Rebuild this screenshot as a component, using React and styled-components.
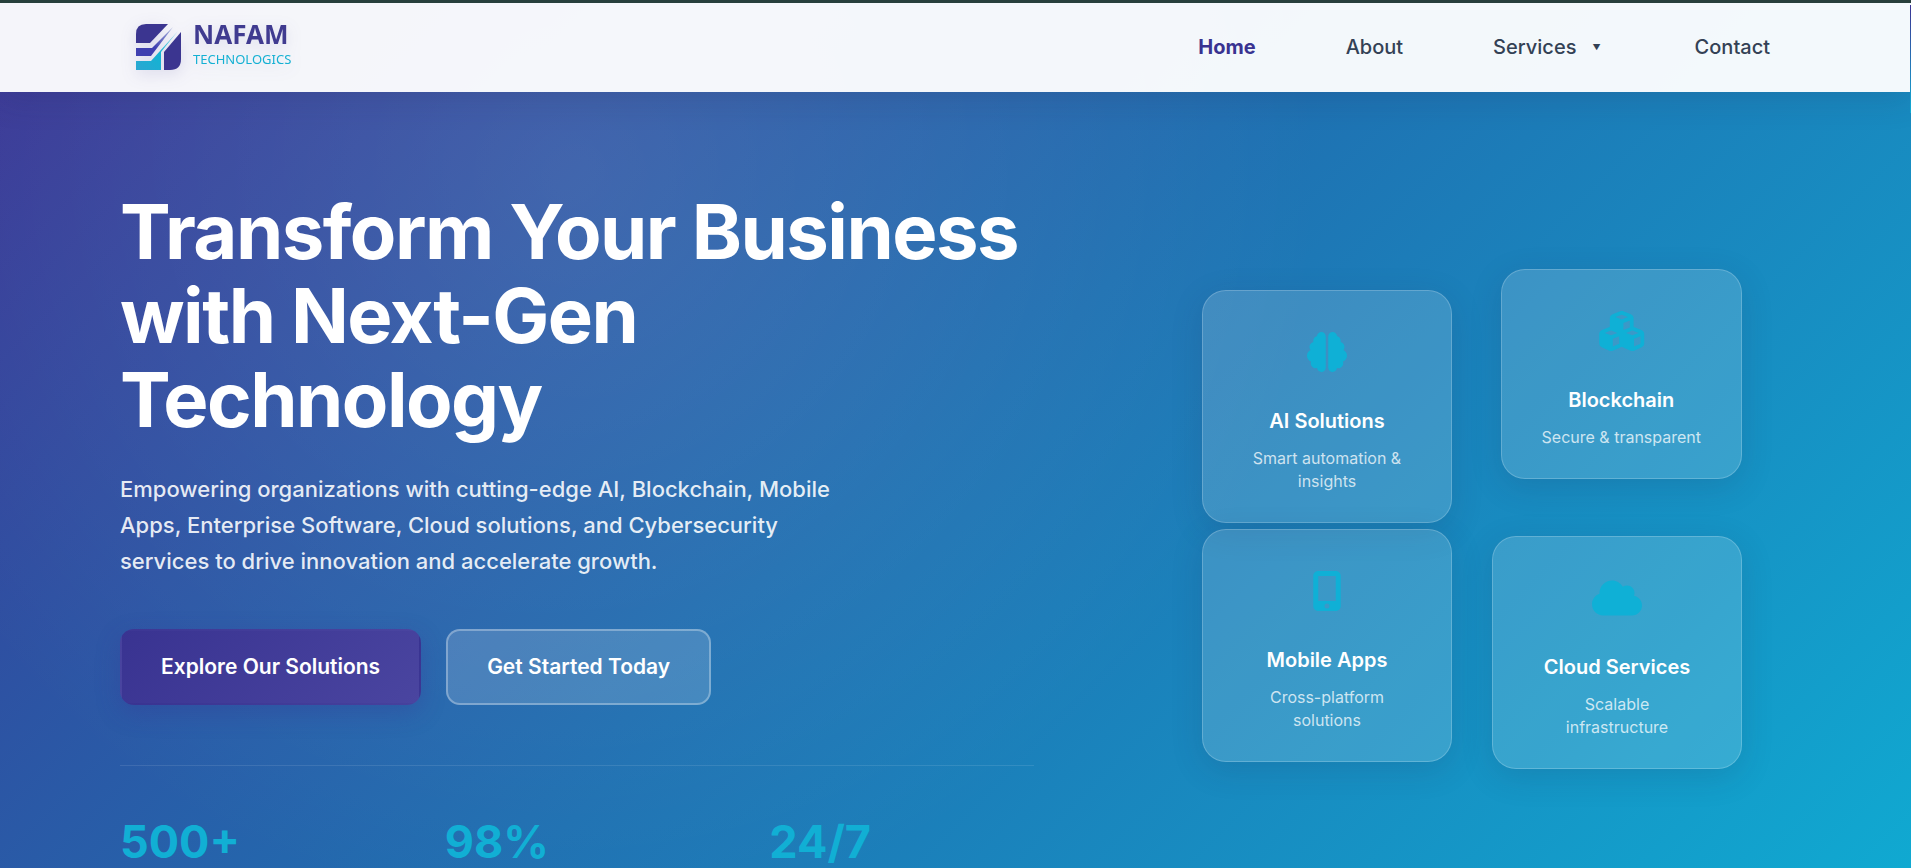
import React from "react";
import styled, { createGlobalStyle } from "styled-components";
import {
  FaBrain,
  FaCubes,
  FaCloud,
  FaMobileScreenButton,
} from "react-icons/fa6";

const NAV_LINKS = [
  { name: "Home", active: true },
  { name: "About" },
  { name: "Services", menu: true },
  { name: "Contact" },
];

const STATS = ["500+", "98%", "24/7"];

const CARDS_LEFT = [
  { icon: FaBrain, title: "AI Solutions", desc: "Smart automation & insights" },
  {
    icon: FaMobileScreenButton,
    title: "Mobile Apps",
    desc: "Cross-platform solutions",
  },
];

const CARDS_RIGHT = [
  { icon: FaCubes, title: "Blockchain", desc: "Secure & transparent" },
  { icon: FaCloud, title: "Cloud Services", desc: "Scalable infrastructure" },
];

const LogoMark = () => (
  <svg width="46" height="46" viewBox="0 0 46 46" aria-hidden="true">
    <defs>
      <linearGradient id="ray" x1="0" y1="1" x2="1" y2="0">
        <stop offset="0.4" stopColor="#3f3fb0" />
        <stop offset="1" stopColor="#a9b4dd" />
      </linearGradient>
      <linearGradient id="beam" x1="0" y1="1" x2="1" y2="0">
        <stop offset="0" stopColor="#2ba6d2" />
        <stop offset="0.5" stopColor="#12b4d3" />
        <stop offset="1" stopColor="#8fdcea" />
      </linearGradient>
    </defs>
    <path d="M0 19V10Q0 0 10 0H32L14 19Z" fill="#3b3590" />
    <path d="M0 24H16L37 3L15 32H0Z" fill="url(#ray)" />
    <path d="M0 37H15L42 7L25 28V46H0Z" fill="url(#beam)" />
    <path d="M45 8V35Q45 46 34 46H28V28Z" fill="#3b3590" />
  </svg>
);

const FeatureCard = ({ icon: Icon, title, desc }) => (
  <Card>
    <CardIcon>
      <Icon />
    </CardIcon>
    <CardTitle>{title}</CardTitle>
    <CardDesc>{desc}</CardDesc>
  </Card>
);

const App = () => {
  return (
    <Page>
      <GlobalStyle />
      <Header>
        <Logo href="#home">
          <LogoMark />
          <LogoText>
            <LogoName>NAFAM</LogoName>
            <LogoSub>TECHNOLOGICS</LogoSub>
          </LogoText>
        </Logo>
        <Nav>
          {NAV_LINKS.map((e, i) => (
            <NavLink key={i} href="#" $active={e.active}>
              {e.name}
              {e.menu && <Caret>▼</Caret>}
            </NavLink>
          ))}
        </Nav>
      </Header>
      <Hero>
        <HeroContent>
          <Headline>Transform Your Business with Next-Gen Technology</Headline>
          <Intro>
            Empowering organizations with cutting-edge AI, Blockchain, Mobile
            Apps, Enterprise Software, Cloud solutions, and Cybersecurity
            services to drive innovation and accelerate growth.
          </Intro>
          <Actions>
            <PrimaryButton>Explore Our Solutions</PrimaryButton>
            <GlassButton>Get Started Today</GlassButton>
          </Actions>
          <Stats>
            {STATS.map((e, i) => (
              <StatValue key={i}>{e}</StatValue>
            ))}
          </Stats>
        </HeroContent>
        <HeroVisual>
          <CardColumn $top={21} $gap={6}>
            {CARDS_LEFT.map((e, i) => (
              <FeatureCard key={i} {...e} />
            ))}
          </CardColumn>
          <CardColumn $top={0} $gap={57}>
            {CARDS_RIGHT.map((e, i) => (
              <FeatureCard key={i} {...e} />
            ))}
          </CardColumn>
        </HeroVisual>
      </Hero>
      <ScrollThumb />
    </Page>
  );
};

export default App;

const GlobalStyle = createGlobalStyle`
  * {
    box-sizing: border-box;
    margin: 0;
    padding: 0;
  }

  body {
    font-family: "Inter", sans-serif;
  }
`;

const Page = styled.div`
  position: relative;
  display: flex;
  flex-direction: column;
  min-height: 100vh;
  border-top: 3px solid #28413c;
  background: radial-gradient(
      circle at 30% 20%,
      rgba(255, 255, 255, 0.1) 0%,
      transparent 50%
    ),
    linear-gradient(135deg, #3b3494 0%, #1f71b2 50%, #10a9d1 100%);
`;

const Header = styled.header`
  display: flex;
  flex-shrink: 0;
  justify-content: space-between;
  align-items: center;
  height: 89px;
  padding: 0 121px 2px 120px;
  background-color: rgba(255, 255, 255, 0.95);
  box-shadow: 0 8px 32px rgba(31, 38, 80, 0.15);
`;

const Logo = styled.a`
  display: flex;
  align-items: center;
  gap: 11px;
  padding-left: 16px;
  text-decoration: none;
  filter: drop-shadow(0 4px 8px rgba(59, 53, 144, 0.15));
`;

const LogoText = styled.span`
  display: flex;
  flex-direction: column;
  padding-bottom: 3px;
  font-family: "Noto Sans", sans-serif;
`;

const LogoName = styled.span`
  color: #403b90;
  font-size: 26px;
  font-weight: 700;
  line-height: 28px;
`;

const LogoSub = styled.span`
  color: #14b0d3;
  font-size: 13px;
  line-height: 22px;
`;

const Nav = styled.nav`
  display: flex;
  gap: 50px;
`;

const NavLink = styled.a`
  display: flex;
  align-items: center;
  padding: 8px 20px;
  color: ${({ $active }) => ($active ? "#393391" : "#334155")};
  font-size: 20px;
  font-weight: ${({ $active }) => ($active ? 700 : 500)};
  line-height: 32px;
  text-decoration: none;
`;

const Caret = styled.span`
  margin: 0 4px 0 16px;
  font-size: 8px;
`;

const Hero = styled.main`
  display: flex;
  justify-content: space-between;
  padding: 97px 120px 0;
`;

const HeroContent = styled.section`
  width: 914px;
`;

const Headline = styled.h1`
  color: #fff;
  font-size: 76px;
  font-weight: 700;
  letter-spacing: -0.02em;
  line-height: 84px;
`;

const Intro = styled.p`
  max-width: 740px;
  margin-top: 30px;
  color: rgba(255, 255, 255, 0.88);
  font-size: 22px;
  font-weight: 500;
  line-height: 36px;
`;

const Actions = styled.div`
  display: flex;
  gap: 25px;
  margin-top: 50px;
`;

const Button = styled.button`
  padding: 20px 39px;
  border: 2px solid transparent;
  border-radius: 14px;
  color: #fff;
  font-family: inherit;
  font-size: 21px;
  font-weight: 600;
  line-height: 32px;
  cursor: pointer;
`;

const PrimaryButton = styled(Button)`
  background: linear-gradient(135deg, #393391, #4a45a0);
  box-shadow: 0 8px 24px rgba(57, 51, 145, 0.3);
`;

const GlassButton = styled(Button)`
  border-color: rgba(255, 255, 255, 0.3);
  background-color: rgba(255, 255, 255, 0.15);
`;

const Stats = styled.div`
  display: grid;
  grid-template-columns: repeat(3, 1fr);
  gap: 60px;
  margin-top: 60px;
  padding-top: 51px;
  border-top: 1px solid rgba(255, 255, 255, 0.1);
`;

const StatValue = styled.div`
  color: #11afd4;
  font-size: 45px;
  font-weight: 700;
  line-height: 50px;
`;

const HeroVisual = styled.section`
  display: flex;
  gap: 40px;
  margin: 80px 49px 0 0;
`;

const CardColumn = styled.div`
  display: flex;
  flex-direction: column;
  align-items: flex-end;
  gap: ${({ $gap }) => $gap}px;
  width: 250px;
  padding-top: ${({ $top }) => $top}px;
`;

const Card = styled.article`
  max-width: 100%;
  padding: 29px 40px;
  border: 1px solid rgba(255, 255, 255, 0.2);
  border-radius: 24px;
  background-color: rgba(255, 255, 255, 0.15);
  box-shadow: 0 8px 32px rgba(31, 38, 80, 0.15);
  text-align: center;
`;

const CardIcon = styled.div`
  display: flex;
  justify-content: center;
  align-items: center;
  height: 64px;
  margin-bottom: 21px;
  color: #0fb0d6;

  svg {
    width: 100%;
    height: 40px;
  }
`;

const CardTitle = styled.h3`
  color: #fff;
  font-size: 20px;
  font-weight: 600;
  line-height: 32px;
`;

const CardDesc = styled.p`
  margin-top: 10px;
  color: rgba(255, 255, 255, 0.75);
  font-size: 16px;
  line-height: 23px;
`;

/* sliver of the page scroll thumb, lies over the right edge */
const ScrollThumb = styled.span`
  position: absolute;
  top: 2px;
  right: 0;
  width: 1px;
  height: 108px;
  background: linear-gradient(#3b3494, #10acd4);
`;
